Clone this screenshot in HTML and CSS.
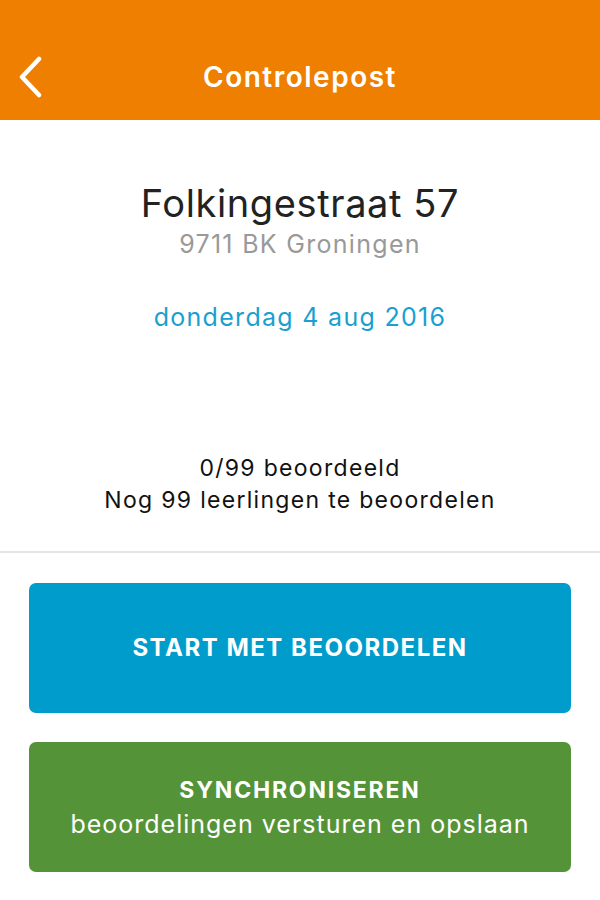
FILE: index.html
```html
<!DOCTYPE html>
<html lang="nl">
<head>
    <meta charset="UTF-8">
    <meta name="viewport" content="width=device-width, initial-scale=1.0">
    <title>Controlepost</title>
    <link rel="stylesheet" href="styles.css">
</head>
<body>
    <div class="header">
        <a class="back" href="#">
            <svg width="24" height="42" viewBox="0 0 24 42">
                <polyline points="20,3 3,21 20,39" fill="none" stroke="#fff" stroke-width="4.5" stroke-linecap="round" stroke-linejoin="round"/>
            </svg>
        </a>
        <h1 class="title">Controlepost</h1>
    </div>

    <div class="info">
        <div class="street">Folkingestraat 57</div>
        <div class="city">9711 BK Groningen</div>
        <div class="date">donderdag 4 aug 2016</div>
        <div class="status">
            <div>0/99 beoordeeld</div>
            <div>Nog 99 leerlingen te beoordelen</div>
        </div>
    </div>

    <div class="actions">
        <button class="button start">START MET BEOORDELEN</button>
        <button class="button sync">
            <span class="label">SYNCHRONISEREN</span>
            <span class="sub">beoordelingen versturen en opslaan</span>
        </button>
    </div>
</body>
</html>
```
FILE: styles.css
```css
body {
    margin: 0;
    font-family: Inter, "Liberation Sans", Arial, sans-serif;
    background-color: #fff;
}
.header {
    height: 120px;
    background-color: #ee7f00;
    display: flex;
    align-items: flex-end;
    justify-content: center;
    position: relative;
}
.back {
    position: absolute;
    left: 19px;
    top: 56px;
    display: block;
}
.title {
    margin: 0 0 27px 0;
    color: #fff;
    font-size: 28px;
    font-weight: 600;
    line-height: 32px;
    letter-spacing: 1.5px;
}
.info {
    text-align: center;
    padding-top: 56px;
    padding-bottom: 35px;
    border-bottom: 2px solid #e6e6e6;
}
.street {
    font-size: 38px;
    color: #222;
    line-height: 54px;
    letter-spacing: 0.6px;
}
.city {
    font-size: 25px;
    color: #999;
    line-height: 28px;
    letter-spacing: 1.3px;
}
.date {
    margin-top: 44px;
    font-size: 25px;
    color: #1a9fd0;
    line-height: 30px;
    letter-spacing: 1.3px;
}
.status {
    margin-top: 120px;
    font-size: 23px;
    color: #111;
    line-height: 32px;
    letter-spacing: 1.3px;
}
.actions {
    padding: 30px 29px;
    display: flex;
    flex-direction: column;
    gap: 29px;
}
.button {
    border: none;
    border-radius: 7px;
    height: 130px;
    color: #fff;
    font-family: Inter, "Liberation Sans", sans-serif;
    display: flex;
    flex-direction: column;
    align-items: center;
    justify-content: center;
}
.start {
    background-color: #009ccb;
    font-size: 24px;
    font-weight: bold;
    letter-spacing: 1.5px;
    padding-bottom: 3px;
}
.sync {
    background-color: #559338;
}
.sync .label {
    font-size: 23px;
    font-weight: bold;
    line-height: 34px;
    letter-spacing: 1.8px;
}
.sync .sub {
    font-size: 25px;
    line-height: 34px;
    letter-spacing: 1px;
}
```
